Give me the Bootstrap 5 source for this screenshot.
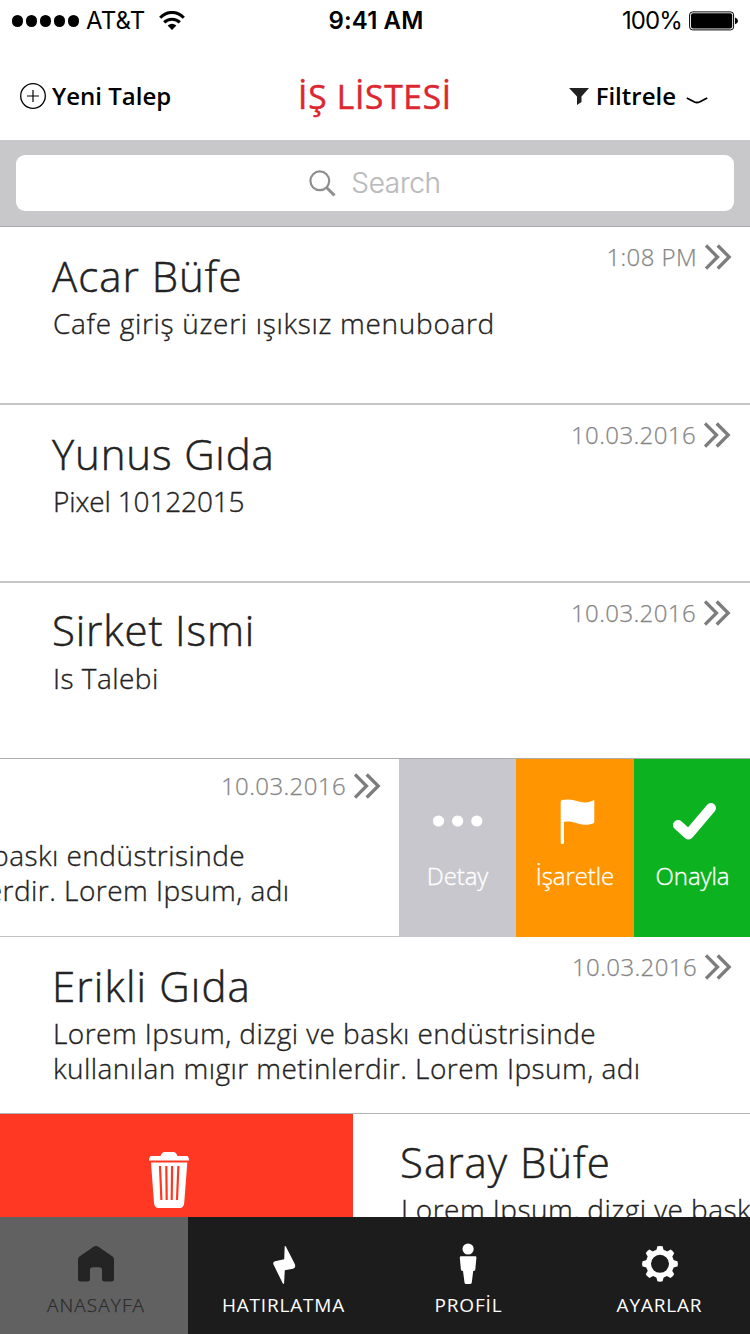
<!DOCTYPE html>
<html lang="tr">
<head>
<meta charset="utf-8">
<meta name="viewport" content="width=device-width, initial-scale=1">
<title>İş Listesi</title>
<link rel="stylesheet" href="https://cdn.jsdelivr.net/npm/bootstrap@5.3.0/dist/css/bootstrap.min.css">
<style>
body{font-family:"Open Sans",sans-serif;color:#222;background:#fff;}
.phone{width:750px;height:1334px;}
svg{display:block;flex:none;}
.t{white-space:nowrap;display:block;}
/* status bar */
.status{height:42px;font-family:Inter,"Liberation Sans",sans-serif;font-size:24px;line-height:42px;color:#000;padding:0 12px;}
.status>div,.navtop>div{flex:1 1 0;}
.dots{gap:2.9px;margin-right:7px;}
.dots i{width:11.100px;height:11.100px;border-radius:50%;background:#000;}
.clock{font-weight:600;letter-spacing:.15px;padding-left:2px;}
.carrier{letter-spacing:.1px;}
.wifi{margin-left:14px;}
.percent{letter-spacing:-.9px;}
.battery{margin-left:7px;}
/* navigation */
.navtop{height:98px;color:#000;padding:0 20px;font-size:24px;font-weight:600;line-height:36px;}
.navtop>div{padding-top:36px;}
.ttl{color:#dc2630;font-size:33.500px;font-weight:400;letter-spacing:.75px;-webkit-text-stroke:.5px #dc2630;}
.plus{margin:4px 6px 0 0;}
.funnel{margin:10px 7px 0 0;}
.caret{margin:19px 22px 0 10px;}
.searchbar{height:87px;background:#c8c8ca;border-bottom:1px solid #aaaaac;padding:15px 16px 0;}
.searchbox{height:56px;border-radius:9px;font-family:Inter,"Liberation Sans",sans-serif;font-size:28px;font-weight:300;color:#bababc;letter-spacing:-.3px;-webkit-text-stroke:.2px #bababc;}
.lens{margin-right:15px;}
/* job list */
.item{flex:none;width:750px;padding:0 18px 0 52px;}
.jobrow{height:178px;border-bottom:2px solid #c6c6c6;overflow:hidden;}
.jobrow.third{height:176px;border-bottom:1px solid #acacac;}
.jobrow.fifth{height:177px;border-bottom:1px solid #b4b4b4;}
.swiped{height:178px;overflow:hidden;}
.name{font-size:42px;font-weight:300;line-height:48px;padding-top:25px;margin-bottom:6px;letter-spacing:1px;-webkit-text-stroke:.5px #222;}
.third .name{padding-top:23px;margin-bottom:7px;}
.desc{font-size:28px;font-weight:300;line-height:35.300px;padding-left:1px;letter-spacing:.46px;-webkit-text-stroke:.35px #222;}
.meta{font-size:24px;font-weight:300;line-height:34px;color:#858585;padding-top:13px;letter-spacing:.4px;-webkit-text-stroke:.25px #858585;}
.meta.in2{margin-right:1px;}
.ls7{letter-spacing:.69px}.ls0{letter-spacing:-.15px}.ls85{letter-spacing:.85px}.ls115{letter-spacing:1.150px}
.pulled{margin-left:-351px;border-bottom:1px solid #c0c0c0;}
.pulled .desc{padding-top:79px;}
.pulled .meta{float:right;padding-top:10px;}
.act{flex:none;color:#fff;font-size:24px;font-weight:300;line-height:32px;letter-spacing:-.1px;-webkit-text-stroke:.35px #fff;width:117px;}
.act svg{margin:37px 0 12px;}
.act.detail{background:#c8c7cd;}
.act.flagit{background:#ff9500;width:118px;}
.act.approve{background:#0db221;}
.remove{flex:none;width:353px;background:#ff3824;padding:37px 0 0 148px;}
.lastitem{flex:1 1 0;min-width:0;padding-left:47px;overflow:hidden;}
.lastitem .name{padding-top:24px;}
/* tab bar */
.tabs{height:117px;background:#1c1c1c;color:#fff;font-size:19px;line-height:26px;letter-spacing:.82px;}
.tabcell{flex:none;padding-top:24px;}
.tabcell svg{margin-bottom:8px;}
.tabcell.on{width:188px;background:#616161;color:#2a2a2a;font-weight:300;padding-left:4px;letter-spacing:1.100px;-webkit-text-stroke:.25px #2a2a2a;}
.tabcell.two{width:191px}.tabcell.three{width:179px}.tabcell.four{width:203px}
</style>
</head>
<body>
<svg width="0" height="0" class="position-absolute">
  <symbol id="chev" viewBox="0 0 27 32"><path d="M1 4.500L12.500 16L1 27.500M12.700 4.500L24.200 16L12.700 27.500" fill="none" stroke="#7d7d7d" stroke-width="3.300"/></symbol>
</svg>
<div class="phone d-flex flex-column overflow-hidden">
  <header class="flex-shrink-0">
    <div class="status d-flex">
      <div class="d-flex align-items-center">
        <span class="dots d-flex"><i></i><i></i><i></i><i></i><i></i></span>
        <span class="t carrier">AT&amp;T</span>
        <svg class="wifi" width="26" height="20" viewBox="0 0 26 20"><path d="M1.200 6.800C8-.4 18 -.4 24.800 6.800M5.200 11.400C9.500 7.100 16.500 7.100 20.800 11.400" fill="none" stroke="#000" stroke-width="3"/><path d="M8.600 14.600Q13 10.800 17.400 14.600L13 19z"/></svg>
      </div>
      <div class="d-flex justify-content-center"><span class="t clock">9:41 AM</span></div>
      <div class="d-flex justify-content-end align-items-center">
        <span class="t percent">100%</span>
        <svg class="battery" width="49" height="20" viewBox="0 0 49 20"><rect x=".6" y=".9" width="44" height="18" rx="3" fill="none" stroke="#000"/><rect x="2" y="2.200" width="41.200" height="15.400" rx="2"/><path d="M46 6.500q3 1 3 3.400t-3 3.400z"/></svg>
      </div>
    </div>
    <nav class="navtop d-flex">
      <div class="d-flex">
        <svg class="plus" width="26" height="28" viewBox="0 0 26 28" fill="none" stroke="#000"><circle cx="13" cy="14" r="12.300" stroke-width="1.300"/><path d="M7 14H19M13 8V20" stroke-width="1.200"/></svg>
        <span class="t">Yeni Talep</span>
      </div>
      <div class="d-flex justify-content-center"><span class="t ttl">İŞ LİSTESİ</span></div>
      <div class="d-flex justify-content-end">
        <svg class="funnel" width="20" height="17" viewBox="0 0 20 17" fill="#222"><path d="M0 0H20L12.500 8.500V14L8 17V8.500z"/></svg>
        <span class="t">Filtrele</span>
        <svg class="caret" width="22" height="8" viewBox="0 0 22 8" fill="none" stroke="#000" stroke-width="1.900"><path d="M.8 1L8.500 5Q11 6.100 13.500 5L21.200 1"/></svg>
      </div>
    </nav>
    <div class="searchbar"><div class="searchbox bg-white d-flex justify-content-center align-items-center">
      <svg class="lens" width="27" height="27" viewBox="0 0 27 27" fill="none" stroke="#8e8e90" stroke-width="2.200"><circle cx="10.800" cy="10.800" r="9.400"/><path d="M17.500 17.500L25.500 25.500" stroke-width="3"/></svg>
      <span class="t">Search</span>
    </div></div>
  </header>
  <main class="flex-fill overflow-hidden">
    <div class="jobrow"><div class="item">
      <div class="d-flex justify-content-between"><span class="t name">Acar Büfe</span><span class="meta d-flex"><span class="t">1:08 PM</span><svg class="ms-2" width="27" height="34"><use href="#chev"/></svg></span></div>
      <span class="t desc ls7">Cafe giriş üzeri ışıksız menuboard</span>
    </div></div>
    <div class="jobrow"><div class="item">
      <div class="d-flex justify-content-between"><span class="t name ls85">Yunus Gıda</span><span class="meta in2 d-flex"><span class="t">10.03.2016</span><svg class="ms-2" width="27" height="34"><use href="#chev"/></svg></span></div>
      <span class="t desc ls0">Pixel 10122015</span>
    </div></div>
    <div class="jobrow third"><div class="item">
      <div class="d-flex justify-content-between"><span class="t name ls85">Sirket Ismi</span><span class="meta in2 d-flex"><span class="t">10.03.2016</span><svg class="ms-2" width="27" height="34"><use href="#chev"/></svg></span></div>
      <span class="t desc">Is Talebi</span>
    </div></div>
    <div class="swiped d-flex">
      <div class="item pulled">
        <span class="meta d-flex"><span class="t">10.03.2016</span><svg class="ms-2" width="27" height="34"><use href="#chev"/></svg></span>
        <span class="t desc">Lorem Ipsum, dizgi ve baskı endüstrisinde<br>kullanılan mıgır metinlerdir. Lorem Ipsum, adı</span>
      </div>
      <div class="act detail d-flex flex-column align-items-center"><svg width="50" height="52" viewBox="433 796 50 52" fill="#fff"><circle cx="438.500" cy="821" r="5.600"/><circle cx="457.600" cy="821" r="5.600"/><circle cx="476.800" cy="821" r="5.600"/></svg><span>Detay</span></div>
      <div class="act flagit d-flex flex-column align-items-center"><svg width="50" height="52" viewBox="550 796 50 52" fill="#fff"><path d="M560.700 801.500Q560.700 800.300 562 800C569 798.500 574 800 580 801.700C586 803.300 590 802.300 594.300 800V822.800C589 825.500 583 825.300 577 823.300C572 821.600 568 821 564 822V842.500Q564 844 562.300 844T560.700 842.500z"/></svg><span>İşaretle</span></div>
      <div class="act approve d-flex flex-column align-items-center"><svg width="50" height="52" viewBox="668 796 50 52" fill="none" stroke="#fff" stroke-width="10" stroke-linecap="round"><path d="M678 825L688.500 834.500L711 808" stroke-linejoin="round"/></svg><span>Onayla</span></div>
    </div>
    <div class="jobrow fifth"><div class="item">
      <div class="d-flex justify-content-between"><span class="t name ls115">Erikli Gıda</span><span class="meta d-flex"><span class="t">10.03.2016</span><svg class="ms-2" width="27" height="34"><use href="#chev"/></svg></span></div>
      <span class="t desc">Lorem Ipsum, dizgi ve baskı endüstrisinde<br>kullanılan mıgır metinlerdir. Lorem Ipsum, adı</span>
    </div></div>
    <div class="d-flex h-100">
      <div class="remove"><svg width="42" height="58" viewBox="148 1151 42 58"><path fill="#fff" d="M149 1160.500Q149 1156 151.500 1156H160.500Q162 1152 164.500 1152H173.500Q176 1152 177.500 1156H186.500Q189 1156 189 1160.500zM151 1162.500H187.300L184.200 1203Q183.800 1208 179.500 1208H158.700Q154.400 1208 154 1203z"/><path stroke="#ff3824" stroke-width="2.200" d="M160 1166L161.400 1200M166.300 1166L166.700 1200M172.100 1166L171.700 1200M178.400 1166L177 1200"/></svg></div>
      <div class="lastitem"><span class="t name">Saray Büfe</span><span class="t desc">Lorem Ipsum, dizgi ve baskı</span></div>
    </div>
  </main>
  <footer class="tabs d-flex flex-shrink-0">
    <div class="tabcell on d-flex flex-column align-items-center"><svg width="40" height="43" viewBox="76 1241 40 43"><path fill="#242424" d="M93.600 1246.800Q96 1245 98.400 1246.800L112.500 1256.500Q114 1257.500 114 1259.500V1279Q114 1281.500 111.500 1281.500H104.500Q102 1281.500 102 1279V1270Q102 1267.200 99 1267.200H93Q90 1267.200 90 1270V1279Q90 1281.500 87.500 1281.500H80.500Q78 1281.500 78 1279V1259.500Q78 1257.500 79.500 1256.500z"/></svg><span>ANASAYFA</span></div>
    <div class="tabcell two d-flex flex-column align-items-center"><svg width="40" height="43" viewBox="263.500 1241 40 43"><path fill="#fff" d="M284.200 1246.300Q284.900 1245.300 285.600 1247L294.300 1264Q295.700 1267.800 292.500 1268.700L284.300 1270.300 283.600 1283Q283.200 1284.600 282.200 1283.300L273 1264.500Q272 1262 274.500 1261.300L283.700 1259.300z"/></svg><span>HATIRLATMA</span></div>
    <div class="tabcell three d-flex flex-column align-items-center"><svg width="40" height="43" viewBox="448.500 1241 40 43"><circle cx="467.600" cy="1249" r="5.600" fill="#fff"/><path fill="#fff" d="M460.500 1256.300H474.700Q476 1256.300 475.900 1257.800L474.800 1269.500Q474.600 1271 472.700 1271L471.300 1282.500Q471 1284 469.500 1284H465.500Q464.200 1284 464 1282.500L462.500 1271Q460.600 1271 460.400 1269.500L459.300 1257.800Q459.200 1256.300 460.500 1256.300z"/></svg><span>PROFİL</span></div>
    <div class="tabcell four d-flex flex-column align-items-center"><svg width="40" height="43" viewBox="639.800 1241 40 43"><g fill="#fff" transform="translate(659.800 1263.800)"><circle r="11.600" fill="none" stroke="#fff" stroke-width="5.200"/><path id="tooth" d="M-3.800 -13L-2.600 -17.500Q0 -18.300 2.600 -17.500L3.800 -13z"/><use href="#tooth" transform="rotate(45)"/><use href="#tooth" transform="rotate(90)"/><use href="#tooth" transform="rotate(135)"/><use href="#tooth" transform="rotate(180)"/><use href="#tooth" transform="rotate(225)"/><use href="#tooth" transform="rotate(270)"/><use href="#tooth" transform="rotate(315)"/></g></svg><span>AYARLAR</span></div>
  </footer>
</div>
<script src="https://cdn.jsdelivr.net/npm/bootstrap@5.3.0/dist/js/bootstrap.bundle.min.js"></script>
</body>
</html>
